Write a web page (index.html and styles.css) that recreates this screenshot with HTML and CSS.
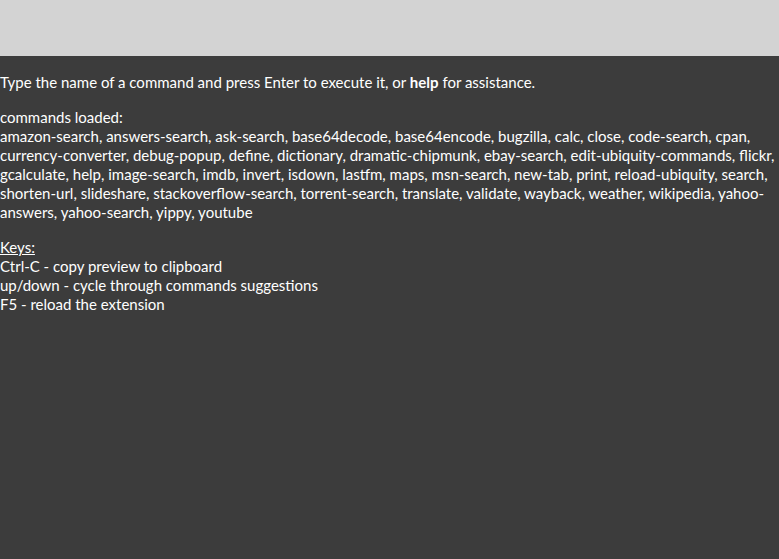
FILE: index.html
```html
<!DOCTYPE html>
<html>
<head>
<meta charset="utf-8">
<link rel="stylesheet" href="styles.css">
</head>
<body>
<div class="topbar"></div>
<div class="panel">
  <p class="intro">Type the name of a command and press Enter to execute it, or <b>help</b> for assistance.</p>
  <p class="commands">commands loaded:<br>amazon-search, answers-search, ask-search, base64decode, base64encode, bugzilla, calc, close, code-search, cpan, currency-converter, debug-popup, define, dictionary, dramatic-chipmunk, ebay-search, edit-ubiquity-commands, flickr, gcalculate, help, image-search, imdb, invert, isdown, lastfm, maps, msn-search, new-tab, print, reload-ubiquity, search, shorten-url, slideshare, stackoverflow-search, torrent-search, translate, validate, wayback, weather, wikipedia, yahoo-answers, yahoo-search, yippy, youtube</p>
  <p class="keys"><u>Keys:</u><br>Ctrl-C - copy preview to clipboard<br>up/down - cycle through commands suggestions<br>F5 - reload the extension</p>
</div>
</body>
</html>
```
FILE: styles.css
```css
html, body {
  margin: 0;
  padding: 0;
  height: 100%;
}
body {
  background: #3c3c3c;
  font-family: Lato, "Open Sans", sans-serif;
  font-size: 15px;
  line-height: 19px;
  color: #ffffff;
}
.topbar {
  height: 56px;
  background: #d3d3d3;
}
.panel {
  padding-top: 17px;
}
.panel p {
  margin: 0 0 16px 0;
}
.panel b {
  font-weight: bold;
}
```
